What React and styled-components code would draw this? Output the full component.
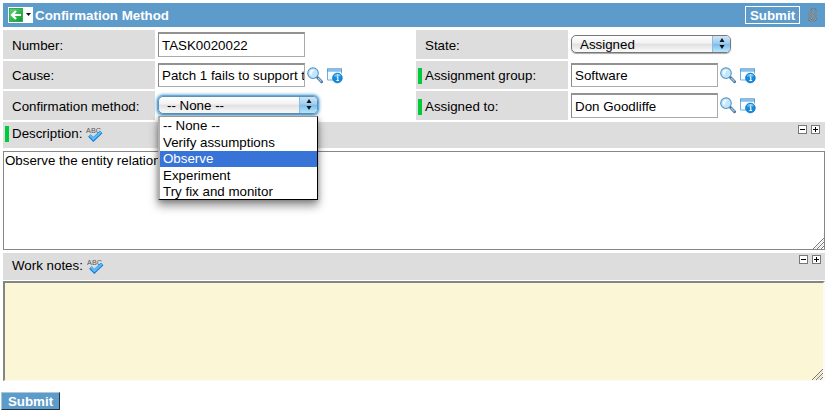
import React from "react";
import styled, { createGlobalStyle, css } from "styled-components";

const Global = createGlobalStyle`
  * { box-sizing: border-box; }
  html, body { margin: 0; background: #fff; }
  body { font-family: "Liberation Sans", Arial, sans-serif; font-size: 13.33px; color: #000; overflow: hidden; }
`;

const Page = styled.main`
  width: 825px;
  height: 415px;
  padding-top: 3px;
  overflow: hidden;
`;

const Header = styled.header`
  display: flex;
  align-items: center;
  height: 24px;
  margin-left: 3px;
  padding: 0 8px 0 5px;
  background: #5d9bcb;
  color: #fff;
`;

const BackButton = styled.span`
  display: flex;
  width: 25px;
  height: 16px;
  background: #fff;
  svg { display: block; }
`;

const Title = styled.h1`
  flex: 1;
  margin: 0 0 0 2px;
  font-size: 13.33px;
  line-height: 25px;
  font-weight: bold;
`;

const HeaderButton = styled.button`
  width: 55px;
  height: 18px;
  margin-right: 8px;
  padding: 0;
  border: 1px solid #fff;
  background: transparent;
  color: #fff;
  font: bold 13.33px/17px "Liberation Sans", Arial, sans-serif;
`;

const Fields = styled.section`
  display: grid;
  grid-template-columns: 152px 255px 152px 1fr;
  grid-template-rows: 29px 28px 29px;
  row-gap: 2px;
  column-gap: 3px;
  margin: 3px 0 0 3px;
  height: 92px;
`;

const Label = styled.label`
  display: flex;
  align-items: center;
  height: 100%;
  padding: ${(p) => (p.$low ? 2 : 1)}px 0 0 ${(p) => (p.$required ? 2 : 9)}px;
  background: #ddd;
  white-space: nowrap;
`;

const Required = styled.i`
  width: 4px;
  height: 16px;
  margin-right: 3px;
  background: #00c93c;
`;

const Control = styled.div`
  position: relative;
  display: flex;
  align-items: center;
  height: 100%;
`;

const Input = styled.div`
  width: 147px;
  height: ${(p) => p.$h || 25}px;
  padding: 0 2px 0 3px;
  line-height: ${(p) => (p.$h ? 22 : 24)}px;
  border: 1px solid #aaa;
  border-top: 2px solid #929292;
  border-left-color: #8a8a8a;
  background: #fff;
  overflow: hidden;
  white-space: nowrap;
`;

const Lookup = styled.span`
  display: flex;
  gap: 3px;
  margin-left: 2px;
`;

const Select = styled.div`
  display: flex;
  width: 160px;
  height: 18px;
  margin-top: -2px;
  padding-left: 8px;
  line-height: 17px;
  border: 1px solid #777;
  border-radius: 5px;
  background: linear-gradient(#fff 0, #f2f2f2 45%, #e0e0e0 50%, #fbfbfb 100%);
  box-shadow: 0 1px 1px #aaa;
  overflow: hidden;
  ${(p) => p.$focused && css`
    border-color: #5793bd;
    box-shadow: 0 0 1px 1px #65a7d5, 0 0 3px 2px #91c2e4;
  `}
  span { flex: 1; }
`;

const Stepper = styled.b`
  display: flex;
  align-items: center;
  justify-content: center;
  width: 18px;
  height: 16px;
  border-left: 1px solid #8fbcdd;
  background: linear-gradient(#cfe6f8 0, #a0cdef 45%, #7dbce9 52%, #b8e8ff 100%);
`;

const Menu = styled.div`
  position: absolute;
  z-index: 2;
  top: 25px;
  left: 0;
  width: 160px;
  height: 84px;
  padding-top: 1px;
  border: 1px solid #000;
  border-width: 1px 1px 1px 2px;
  border-left-color: #b0b0b0;
  border-top-color: #999;
  background: #fff;
  box-shadow: 0 6px 9px rgba(0,0,0,.4), 0 1px 5px rgba(0,0,0,.25);
`;

const Option = styled.div`
  height: ${(p) => p.$h || 16}px;
  padding-left: 3px;
  line-height: ${(p) => p.$h || 16}px;
  background: ${(p) => (p.$active ? "#3874d7" : "transparent")};
  color: ${(p) => (p.$active ? "#fff" : "#000")};
`;

const SectionBar = styled.div`
  display: flex;
  height: ${(p) => p.$h}px;
  margin-left: 3px;
  padding-right: 5px;
  background: #ddd;
`;

const SectionTitle = styled.div`
  display: flex;
  align-items: center;
  height: ${(p) => p.$h}px;
  flex: 1;
  padding-left: ${(p) => (p.$required ? 2 : 9)}px;
  svg { margin: 2px 0 0 4px; }
`;

const Toggles = styled.div`
  display: flex;
  gap: 4px;
  padding-top: ${(p) => p.$top}px;
  margin-right: ${(p) => p.$right || 0}px;
`;

const Notes = styled.div`
  position: relative;
  height: ${(p) => p.$h}px;
  margin: ${(p) => p.$top}px 0 3px 3px;
  padding: 1px;
  line-height: 16px;
  background: ${(p) => (p.$tinted ? "#fbf6d5" : "#fff")};
  border: 1px solid #878787;
  ${(p) => p.$tinted && css`
    border-width: 2px 2px 1px 2px;
    border-color: #858585 #fafafa #fafafa #858585;
  `}
`;

const Grip = styled.svg`
  position: absolute;
  right: 0;
  bottom: 0;
`;

const SubmitButton = styled.button`
  display: block;
  width: 59px;
  height: 18px;
  margin: 11px 0 0 1px;
  padding: 0;
  border: 1px solid;
  border-color: #a9c8df #22313c #22313c #a9c8df;
  background: #5d9bcb;
  color: #fff;
  font: bold 13.33px/17px "Liberation Sans", Arial, sans-serif;
`;

function BackIcon() {
  return (
    <svg width="25" height="16" viewBox="0 0 25 16">
      <defs><linearGradient id="green" x2="1" y2="1"><stop stopColor="#65d279"/><stop offset="1" stopColor="#079b27"/></linearGradient></defs>
      <rect x="1.5" y="1.5" width="13" height="13" fill="url(#green)" stroke="#35aa50"/>
      <path d="M13 8H4M8 4 4 8l4 4" fill="none" stroke="#fff" strokeWidth="2.2"/>
      <path d="M18 6h5l-2.5 3z" fill="#111"/>
    </svg>
  );
}

function ClipIcon() {
  return (
    <svg width="9" height="14" viewBox="0 0 9 14" fill="none">
      <path d="M1 4v5.5c0 4.8 7 4.8 7 0V3.8C8 .2 3 .2 3 3.8v5.7c0 1.9 2.8 1.9 2.8 0V4" stroke="#4f5f6c" strokeWidth="1.5"/>
      <path d="M1 4v5.5c0 4.8 7 4.8 7 0V3.8C8 .2 3 .2 3 3.8v5.7c0 1.9 2.8 1.9 2.8 0V4" stroke="#ddd8d2" strokeWidth=".6"/>
    </svg>
  );
}

function SearchIcon() {
  return (
    <svg width="16" height="17" viewBox="0 0 16 17">
      <path d="m10.5 10.5 4.1 4.2" stroke="#426e98" strokeWidth="2.8" strokeLinecap="round"/>
      <path d="m11 11 3.5 3.5" stroke="#a5ccea" strokeWidth="1.3"/>
      <circle cx="6" cy="6.2" r="5.3" fill="#c4e6fc" stroke="#5594c5" strokeWidth="1.1"/>
      <path d="M2.7 6a3.5 3.5 0 0 1 5-3.1C6 3.6 5 5 4.8 8 3.5 8 2.7 7 2.7 6" fill="#eefaff"/>
    </svg>
  );
}

function InfoIcon() {
  return (
    <svg width="17" height="17" viewBox="0 0 17 17">
      <path d="M1.5 2h14v11h-14z" fill="#f6fcff" stroke="#70aee0"/>
      <path d="M1 1.5h15v3H1z" fill="#579cd5"/>
      <path d="M2 3h13" stroke="#c0e1f6"/>
      <path d="M7 6.5h10v8H7z" fill="#fff"/>
      <circle cx="11.4" cy="11" r="4.9" fill="#158bdc" stroke="#0869b4" strokeWidth=".6"/>
      <path d="M7.7 9.4a4 4 0 0 1 7.3-.4q-3.2.9-7.3.4" fill="#67c5fa"/>
      <path d="M10.7 10h1.1v3.4M10.4 13.5h2.7M11.1 8h1.2" stroke="#fff" strokeWidth="1.1" fill="none"/>
    </svg>
  );
}

function SpellIcon() {
  return (
    <svg width="18" height="15" viewBox="0 0 18 15">
      <text x="0" y="6" fill="#555" fontFamily="Liberation Sans, sans-serif" fontSize="7.2" textLength="15">ABC</text>
      <path d="m3.4 8.4 4 4L15.2 5" fill="none" stroke="#1976c8" strokeWidth="3.6"/>
      <path d="m3.8 8.2 3.6 3.6L14.8 5" fill="none" stroke="#55bdff" strokeWidth="2.3"/>
    </svg>
  );
}

function ToggleIcon({ plus }) {
  return (
    <svg width="9" height="9" viewBox="0 0 9 9" shapeRendering="crispEdges">
      <rect x=".5" y=".5" width="8" height="8" fill="#fff" stroke="#777"/>
      <path d={plus ? "M2 4.5h5M4.5 2v5" : "M2 4.5h5"} stroke="#000"/>
    </svg>
  );
}

function ResizeGrip() {
  return (
    <Grip width="11" height="11" viewBox="0 0 11 11">
      <path d="M0 11 11 0M4 11l7-7M8 11l3-3" stroke="#777" strokeWidth="1"/>
      <path d="m2 11 9-9M6 11l5-5" stroke="#ccc" strokeWidth=".6"/>
    </Grip>
  );
}

function Dropdown({ value, focused }) {
  return (
    <Select $focused={focused}>
      <span>{value}</span>
      <Stepper>
        <svg width="6" height="11" viewBox="0 0 6 11"><path d="m3 0 2.5 4h-5zM.5 7h5L3 11z" fill="#111"/></svg>
      </Stepper>
    </Select>
  );
}

function Reference({ value, height }) {
  return (
    <Control>
      <Input $h={height}>{value}</Input>
      <Lookup><SearchIcon /><InfoIcon /></Lookup>
    </Control>
  );
}

export default function App() {
  return (
    <>
      <Global />
      <Page>
        <Header>
          <BackButton><BackIcon /></BackButton>
          <Title>Confirmation Method</Title>
          <HeaderButton>Submit</HeaderButton>
          <ClipIcon />
        </Header>
        <Fields>
          <Label $low>Number:</Label>
          <Control><Input>TASK0020022</Input></Control>
          <Label $low>State:</Label>
          <Control><Dropdown value="Assigned" /></Control>
          <Label>Cause:</Label>
          <Reference value="Patch 1 fails to support the" height={24} />
          <Label $required><Required />Assignment group:</Label>
          <Reference value="Software" height={24} />
          <Label $low>Confirmation method:</Label>
          <Control>
            <Dropdown value="-- None --" focused />
            <Menu>
              <Option>-- None --</Option>
              <Option $h={17}>Verify assumptions</Option>
              <Option $active>Observe</Option>
              <Option $h={17}>Experiment</Option>
              <Option>Try fix and monitor</Option>
            </Menu>
          </Control>
          <Label $required $low><Required />Assigned to:</Label>
          <Reference value="Don Goodliffe" />
        </Fields>
        <SectionBar $h={26}>
          <SectionTitle $h={23} $required><Required />Description: <SpellIcon /></SectionTitle>
          <Toggles $top={3}><ToggleIcon /><ToggleIcon plus /></Toggles>
        </SectionBar>
        <Notes $h={99} $top={3}>Observe the entity relationship<ResizeGrip /></Notes>
        <SectionBar $h={27}>
          <SectionTitle $h={25}>Work notes: <SpellIcon /></SectionTitle>
          <Toggles $top={2} $right={-1}><ToggleIcon /><ToggleIcon plus /></Toggles>
        </SectionBar>
        <Notes $h={100} $top={1} $tinted><ResizeGrip /></Notes>
        <SubmitButton>Submit</SubmitButton>
      </Page>
    </>
  );
}
